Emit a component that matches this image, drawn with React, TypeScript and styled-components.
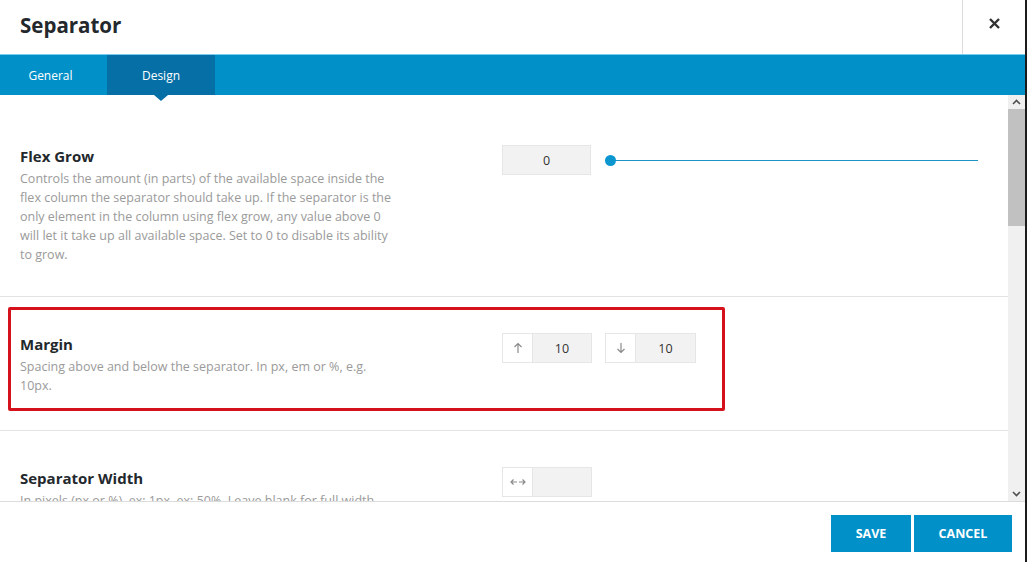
import React from "react";
import styled, { createGlobalStyle } from "styled-components";

const Global = createGlobalStyle`
  html, body { margin: 0; padding: 0; background: #1b1b1b; }
  body { font-family: "Open Sans", "Liberation Sans", sans-serif; }
  * { box-sizing: border-box; }
`;

const Dialog = styled.div`
  width: 1025px;
  height: 562px;
  background: #fff;
  display: flex;
  flex-direction: column;
  overflow: hidden;
`;

const Header = styled.div`
  height: 54px;
  display: flex;
  align-items: stretch;
  flex-shrink: 0;
`;

const Title = styled.h1`
  flex: 1;
  margin: 0;
  padding: 0 20px 4px;
  display: flex;
  align-items: center;
  font-size: 20.5px;
  font-weight: 700;
  color: #23282d;
`;

const CloseButton = styled.button`
  width: 63px;
  border: none;
  border-left: 1px solid #dcdcdc;
  background: #fff;
  display: flex;
  align-items: center;
  justify-content: center;
  padding: 0 0 8px;
  color: #333;
  cursor: pointer;
`;

const TabBar = styled.div`
  height: 41px;
  flex-shrink: 0;
  background: #0290c8;
  border-top: 1px solid #7ccbee;
  display: flex;
`;

const Tab = styled.div<{ $active?: boolean }>`
  position: relative;
  width: ${(p) => (p.$active ? 108 : 107)}px;
  display: flex;
  align-items: center;
  justify-content: center;
  padding-right: ${(p) => (p.$active ? 0 : 6)}px;
  font-size: 12px;
  color: #fff;
  background: ${(p) => (p.$active ? "#0670a6" : "transparent")};
  ${(p) =>
    p.$active &&
    `&::after {
      content: "";
      position: absolute;
      left: 50%;
      bottom: -6px;
      margin-left: -7px;
      border-left: 7px solid transparent;
      border-right: 7px solid transparent;
      border-top: 6px solid #0670a6;
    }`}
`;

const Body = styled.div`
  flex: 1;
  display: flex;
  min-height: 0;
`;

const Content = styled.div`
  flex: 1;
  overflow: hidden;
`;

const Section = styled.div<{ $first?: boolean }>`
  position: relative;
  display: grid;
  grid-template-columns: 482px 1fr;
  padding: ${(p) => (p.$first ? "50px 30px 32px 20px" : "36px 30px 35px 20px")};
  border-bottom: 1px solid #e4e4e4;
`;

const Label = styled.div`
  max-width: 440px;
`;

const FieldTitle = styled.div`
  font-size: 15px;
  font-weight: 700;
  color: #23282d;
  line-height: 22px;
  margin-bottom: 2px;
`;

const Desc = styled.div`
  font-size: 12.5px;
  line-height: 19px;
  color: #9a9a9a;
`;

const Controls = styled.div`
  display: flex;
  align-items: center;
  align-self: start;
  gap: 13px;
  height: 30px;
`;

const ValueBox = styled.div<{ $w: number }>`
  width: ${(p) => p.$w}px;
  height: 30px;
  background: #f2f2f2;
  border: 1px solid #e6e6e6;
  display: flex;
  align-items: center;
  justify-content: center;
  font-size: 12.5px;
  color: #333;
`;

const Group = styled.div`
  display: flex;
  height: 30px;
`;

const IconBox = styled.div`
  width: 30px;
  height: 30px;
  border: 1px solid #e6e6e6;
  border-right: none;
  background: #fff;
  display: flex;
  align-items: center;
  justify-content: center;
  color: #8a8a8a;
`;

const Slider = styled.div`
  position: relative;
  flex: 1;
  height: 12px;
  margin-left: 1px;
  display: flex;
  align-items: center;
  &::before {
    content: "";
    flex: 1;
    height: 1px;
    background: #1e93c4;
  }
`;

const Thumb = styled.span`
  position: absolute;
  left: 0;
  top: 1px;
  width: 11px;
  height: 11px;
  border-radius: 50%;
  background: #0b96d0;
`;

const Highlight = styled.div`
  position: absolute;
  left: 8px;
  top: 10px;
  width: 717px;
  height: 104px;
  border: 3px solid #d5121b;
  border-radius: 2px;
  pointer-events: none;
`;

const ScrollTrack = styled.div`
  width: 17px;
  background: #f0f0f0;
  display: flex;
  flex-direction: column;
`;

const ScrollArrow = styled.div`
  height: 14px;
  display: flex;
  align-items: center;
  justify-content: center;
  color: #505050;
`;

const ScrollThumb = styled.div`
  height: 117px;
  background: #c1c1c1;
`;

const Spacer = styled.div`
  flex: 1;
`;

const Footer = styled.div`
  height: 61px;
  flex-shrink: 0;
  border-top: 1px solid #dcdcdc;
  display: flex;
  justify-content: flex-end;
  gap: 3px;
  padding: 13px 13px 9px;
`;

const Button = styled.button<{ $w: number }>`
  width: ${(p) => p.$w}px;
  height: 37px;
  border: none;
  background: #0290c8;
  color: #fff;
  font-family: "Open Sans", "Liberation Sans", sans-serif;
  font-size: 12.5px;
  font-weight: 700;
  text-transform: uppercase;
  cursor: pointer;
`;

const ArrowUp = () => (
  <svg width="10" height="12" viewBox="0 0 10 12" fill="none" stroke="currentColor" strokeWidth="1.2">
    <path d="M5 11V1.5M1.5 5L5 1.5 8.5 5" />
  </svg>
);

const ArrowDown = () => (
  <svg width="10" height="12" viewBox="0 0 10 12" fill="none" stroke="currentColor" strokeWidth="1.2">
    <path d="M5 1v9.5M1.5 7L5 10.5 8.5 7" />
  </svg>
);

const ArrowsH = () => (
  <svg width="16" height="8" viewBox="0 0 16 8" fill="none" stroke="currentColor" strokeWidth="1.2">
    <path d="M1 4h6M3.5 1.5L1 4l2.5 2.5M9 4h6M12.5 1.5L15 4l-2.5 2.5" />
  </svg>
);

const Chevron = ({ up }: { up?: boolean }) => (
  <svg width="9" height="6" viewBox="0 0 9 6" fill="none" stroke="currentColor" strokeWidth="1.6">
    <path d={up ? "M1 5l3.5-3.5L8 5" : "M1 1l3.5 3.5L8 1"} />
  </svg>
);

const CloseIcon = () => (
  <svg width="11" height="11" viewBox="0 0 11 11" fill="none" stroke="currentColor" strokeWidth="2.4">
    <path d="M1 1l9 9M10 1l-9 9" />
  </svg>
);

export default function App() {
  return (
    <>
      <Global />
      <Dialog>
        <Header>
          <Title>Separator</Title>
          <CloseButton aria-label="Close">
            <CloseIcon />
          </CloseButton>
        </Header>
        <TabBar>
          <Tab>General</Tab>
          <Tab $active>Design</Tab>
        </TabBar>
        <Body>
          <Content>
            <Section $first>
              <Label>
                <FieldTitle>Flex Grow</FieldTitle>
                <Desc>
                  Controls the amount (in parts) of the available space inside the
                  <br />
                  flex column the separator should take up. If the separator is the
                  <br />
                  only element in the column using flex grow, any value above 0
                  <br />
                  will let it take up all available space. Set to 0 to disable its ability
                  <br />
                  to grow.
                </Desc>
              </Label>
              <Controls>
                <ValueBox $w={89}>0</ValueBox>
                <Slider>
                  <Thumb />
                </Slider>
              </Controls>
            </Section>
            <Section>
              <Highlight />
              <Label>
                <FieldTitle>Margin</FieldTitle>
                <Desc>
                  Spacing above and below the separator. In px, em or %, e.g.
                  <br />
                  10px.
                </Desc>
              </Label>
              <Controls>
                <Group>
                  <IconBox>
                    <ArrowUp />
                  </IconBox>
                  <ValueBox $w={60}>10</ValueBox>
                </Group>
                <Group>
                  <IconBox>
                    <ArrowDown />
                  </IconBox>
                  <ValueBox $w={61}>10</ValueBox>
                </Group>
              </Controls>
            </Section>
            <Section>
              <Label>
                <FieldTitle>Separator Width</FieldTitle>
                <Desc>In pixels (px or %), ex: 1px, ex: 50%. Leave blank for full width.</Desc>
              </Label>
              <Controls>
                <Group>
                  <IconBox>
                    <ArrowsH />
                  </IconBox>
                  <ValueBox $w={60}></ValueBox>
                </Group>
              </Controls>
            </Section>
          </Content>
          <ScrollTrack>
            <ScrollArrow>
              <Chevron up />
            </ScrollArrow>
            <ScrollThumb />
            <Spacer />
            <ScrollArrow>
              <Chevron />
            </ScrollArrow>
          </ScrollTrack>
        </Body>
        <Footer>
          <Button $w={80}>Save</Button>
          <Button $w={98}>Cancel</Button>
        </Footer>
      </Dialog>
    </>
  );
}
